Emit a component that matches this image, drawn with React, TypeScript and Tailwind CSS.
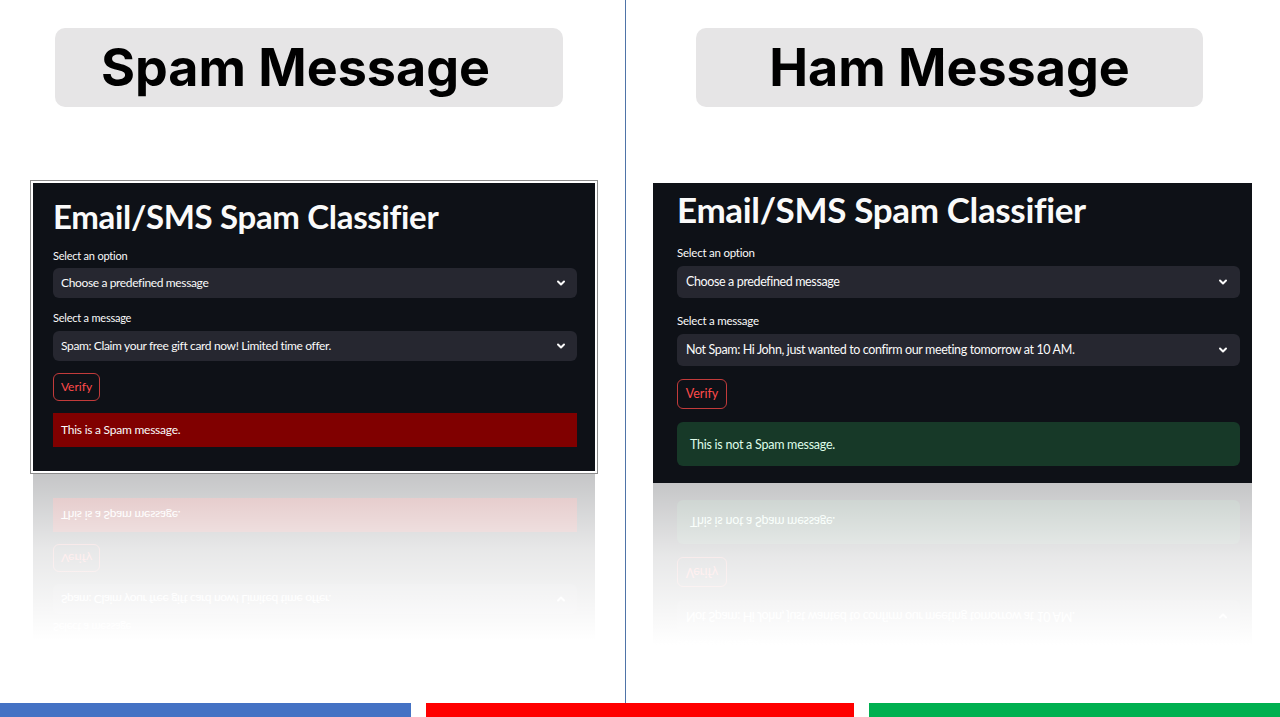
import React from 'react';

type Variant = 'spam' | 'ham';

function Chevron({ className }: { className: string }) {
  return (
    <svg viewBox="0 0 12 12" className={className} fill="none" stroke="currentColor" strokeWidth={2} strokeLinecap="round" strokeLinejoin="round">
      <path d="M3 4.5l3 3 3-3" />
    </svg>
  );
}

// Streamlit app as captured on the left (smaller, framed)
function SpamApp() {
  return (
    <div className="w-[562px] h-[288px] bg-[#0e1117] pl-[20px] pr-[18px] pt-[13px] font-['Lato',sans-serif] text-[#fafafa]">
      <h1 className="text-[33px] leading-[40px] font-bold tracking-[-0.01em]">Email/SMS Spam Classifier</h1>
      <p className="mt-[13px] text-[11px] leading-[14px] tracking-[-0.02em]">Select an option</p>
      <div className="mt-[5px] h-[30px] rounded-md bg-[#262730] flex items-center justify-between pl-[8px] pr-[10px] text-[12px] tracking-[-0.03em]">
        <span>Choose a predefined message</span>
        <Chevron className="w-[12px] h-[12px]" />
      </div>
      <p className="mt-[13px] text-[11px] leading-[14px] tracking-[-0.02em]">Select a message</p>
      <div className="mt-[6px] h-[30px] rounded-md bg-[#262730] flex items-center justify-between pl-[8px] pr-[10px] text-[12px] tracking-[-0.03em]">
        <span>Spam: Claim your free gift card now! Limited time offer.</span>
        <Chevron className="w-[12px] h-[12px]" />
      </div>
      <div className="mt-[12px] w-[47px] h-[28px] rounded-md border border-[#c23b3b] text-[#ff4b4b] text-[12px] flex items-center justify-center">
        Verify
      </div>
      <div className="mt-[12px] h-[34px] bg-[#800000] flex items-center pl-[8px] text-[12px] tracking-[-0.02em]">This is a Spam message.</div>
    </div>
  );
}

// Streamlit app as captured on the right (larger, unframed)
function HamApp() {
  return (
    <div className="w-[599px] h-[300px] bg-[#0e1117] pl-[24px] pr-[12px] pt-[5px] font-['Lato',sans-serif] text-[#fafafa]">
      <h1 className="text-[35px] leading-[42px] font-bold tracking-[-0.01em]">Email/SMS Spam Classifier</h1>
      <p className="mt-[16px] text-[11.5px] leading-[14px] tracking-[-0.02em]">Select an option</p>
      <div className="mt-[6px] h-[32px] rounded-md bg-[#262730] flex items-center justify-between pl-[9px] pr-[11px] text-[12.5px] tracking-[-0.03em]">
        <span>Choose a predefined message</span>
        <Chevron className="w-[12px] h-[12px]" />
      </div>
      <p className="mt-[16px] text-[11.5px] leading-[14px] tracking-[-0.02em]">Select a message</p>
      <div className="mt-[6px] h-[32px] rounded-md bg-[#262730] flex items-center justify-between pl-[9px] pr-[11px] text-[12.5px] tracking-[-0.03em]">
        <span>Not Spam: Hi John, just wanted to confirm our meeting tomorrow at 10 AM.</span>
        <Chevron className="w-[12px] h-[12px]" />
      </div>
      <div className="mt-[13px] w-[50px] h-[30px] rounded-md border border-[#c23b3b] text-[#ff4b4b] text-[12.5px] flex items-center justify-center">
        Verify
      </div>
      <div className="mt-[13px] h-[44px] rounded-md bg-[#173928] text-[#dffde9] flex items-center pl-[13px] pt-[3px] text-[12.5px] tracking-[-0.02em]">
        This is not a Spam message.
      </div>
    </div>
  );
}

function Reflection({ variant }: { variant: Variant }) {
  return (
    <div
      aria-hidden="true"
      className={variant === 'spam' ? 'relative w-[562px] h-[166px] overflow-hidden' : 'relative w-[599px] h-[162px] overflow-hidden'}
    >
      <div className="-scale-y-100">{variant === 'spam' ? <SpamApp /> : <HamApp />}</div>
      <div className="absolute inset-0 bg-[linear-gradient(to_bottom,rgba(255,255,255,0.76),rgba(255,255,255,0.9)_45%,#ffffff)]" />
    </div>
  );
}

export default function App() {
  return (
    <div className="w-[1280px] h-[717px] bg-white overflow-hidden flex flex-col">
      <div className="flex h-[703px]">
        {/* Spam side */}
        <div className="w-[625px] flex flex-col">
          <div className="mt-[28px] ml-[55px] w-[508px] h-[79px] rounded-[10px] bg-[#e6e5e6] flex items-center pl-[46px]">
            <span className="font-['Inter',sans-serif] text-[52px] font-bold text-black leading-none">Spam Message</span>
          </div>
          <div className="mt-[73px] ml-[30px] w-[568px] border border-[#8c8c8c] p-[2px] bg-white">
            <SpamApp />
          </div>
          <div className="ml-[33px]">
            <Reflection variant="spam" />
          </div>
        </div>

        <div className="w-px bg-[#4f74a8]" />

        {/* Ham side */}
        <div className="flex-1 flex flex-col">
          <div className="mt-[28px] ml-[70px] w-[507px] h-[79px] rounded-[10px] bg-[#e6e5e6] flex items-center justify-center">
            <span className="font-['Inter',sans-serif] text-[52px] font-bold text-black leading-none">Ham Message</span>
          </div>
          <div className="mt-[76px] ml-[27px]">
            <HamApp />
            <Reflection variant="ham" />
          </div>
        </div>
      </div>

      <div className="flex h-[14px] gap-[15px]">
        <div className="w-[411px] bg-[#4472c4]" />
        <div className="w-[428px] bg-[#ff0000]" />
        <div className="flex-1 bg-[#00b050]" />
      </div>
    </div>
  );
}
